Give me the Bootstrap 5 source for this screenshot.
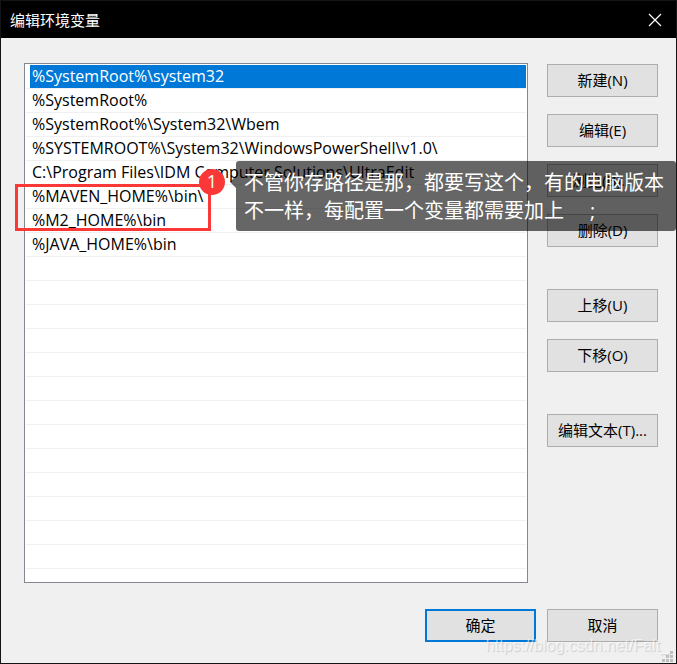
<!DOCTYPE html>
<html lang="zh-CN">
<head>
<meta charset="utf-8">
<meta name="viewport" content="width=device-width, initial-scale=1">
<title>编辑环境变量</title>
<link rel="stylesheet" href="https://cdn.jsdelivr.net/npm/bootstrap@5.3.0/dist/css/bootstrap.min.css">
<style>
body { font-family: "Open Sans", "Noto Sans CJK SC", sans-serif; font-size: 15px; line-height: 24px; color: #000; }
.dialog-window { background: #f0f0f0; border: 1px solid #141414; }
.title-bar { background: #000; color: #fff; height: 37px; padding: 0 14px 0 9px; }
.title-text { font-size: 15px; font-weight: 400; line-height: 36px; }
.close-button { color: #fff; line-height: 0; }
.dialog-body { padding: 25px 18px 21px 23px; }
.main-area { gap: 19px; }
.path-list { border: 1px solid #828790; background: #fff; padding: 1px; font-size: 16px; }
.path-item { height: 24px; line-height: 23px; border-bottom: 1px solid #f0f0f0; white-space: nowrap; }
.path-item a { display: block; margin-left: 4px; padding: 0 2px; color: #000; text-decoration: none; }
.path-item a.selected { background: #0078d7; color: #fff; }
.path-item:last-child { height: 12px; border-bottom: 0; }
.side-buttons { padding-top: 1px; gap: 17px; }
.dialog-button { width: 111px; height: 33px; padding: 0; border: 1px solid #adadad; border-radius: 0; background: #e1e1e1; color: #000; font-size: 15px; line-height: 29px; white-space: nowrap; }
.dialog-button.default-action { border: 2px solid #0078d7; }
.group-start { margin-top: 25px; }
.footer-buttons { gap: 11px; margin-top: 26px; }
.red-frame { left: 15px; top: 184px; width: 196px; height: 47px; border: 3px solid #fb3838; }
.step-number { left: 199px; top: 169px; width: 26px; height: 26px; background: #fb3838; color: #fff; font-size: 18px; line-height: 24px; text-align: center; }
.note-box { left: 236px; right: 1px; top: 161px; padding: 8px 8px 6px; border-radius: 3px; background: rgba(0,0,0,.6); color: #fff; font-size: 20px; line-height: 28px; white-space: nowrap; }
.note-box::before { content: ""; position: absolute; left: -6px; top: 15px; border: 6px solid transparent; border-left: 0; border-right-color: rgba(0,0,0,.6); }
.watermark { right: 8px; bottom: 8px; font: 16px/20px "Liberation Sans", sans-serif; color: rgba(255,255,255,.6); text-shadow: 1px 1px 1px rgba(0,0,0,.15); }
.size-grip { right: 4px; bottom: 2px; line-height: 0; }
</style>
<script defer src="https://cdn.jsdelivr.net/npm/bootstrap@5.3.0/dist/js/bootstrap.bundle.min.js"></script>
</head>
<body>
<div class="position-relative">
  <main class="dialog-window">
    <header class="title-bar d-flex align-items-center justify-content-between">
      <h1 class="title-text m-0">编辑环境变量</h1>
      <button type="button" class="close-button btn p-0 border-0" aria-label="关闭">
        <svg width="14" height="14" viewBox="0 0 14 14" fill="none" stroke="currentColor" stroke-width="1.2"><path d="M1 1L13 13M13 1L1 13"/></svg>
      </button>
    </header>
    <div class="dialog-body">
      <div class="main-area d-flex">
        <ul class="path-list list-unstyled flex-grow-1 mb-0">
          <li class="path-item"><a href="#" class="selected">%SystemRoot%\system32</a></li>
          <li class="path-item"><a href="#">%SystemRoot%</a></li>
          <li class="path-item"><a href="#">%SystemRoot%\System32\Wbem</a></li>
          <li class="path-item"><a href="#">%SYSTEMROOT%\System32\WindowsPowerShell\v1.0\</a></li>
          <li class="path-item"><a href="#">C:\Program Files\IDM Computer Solutions\UltraEdit</a></li>
          <li class="path-item"><a href="#">%MAVEN_HOME%\bin\</a></li>
          <li class="path-item"><a href="#">%M2_HOME%\bin</a></li>
          <li class="path-item"><a href="#">%JAVA_HOME%\bin</a></li>
          <li class="path-item"></li><li class="path-item"></li><li class="path-item"></li><li class="path-item"></li>
          <li class="path-item"></li><li class="path-item"></li><li class="path-item"></li><li class="path-item"></li>
          <li class="path-item"></li><li class="path-item"></li><li class="path-item"></li><li class="path-item"></li>
          <li class="path-item"></li><li class="path-item"></li>
        </ul>
        <div class="side-buttons d-flex flex-column">
          <button type="button" class="dialog-button btn">新建(N)</button>
          <button type="button" class="dialog-button btn">编辑(E)</button>
          <button type="button" class="dialog-button btn">浏览(B)...</button>
          <button type="button" class="dialog-button btn">删除(D)</button>
          <button type="button" class="dialog-button btn group-start">上移(U)</button>
          <button type="button" class="dialog-button btn">下移(O)</button>
          <button type="button" class="dialog-button btn group-start">编辑文本(T)...</button>
        </div>
      </div>
      <div class="footer-buttons d-flex justify-content-end">
        <button type="button" class="dialog-button default-action btn">确定</button>
        <button type="button" class="dialog-button btn">取消</button>
      </div>
    </div>
  </main>
  <div class="red-frame position-absolute"></div>
  <div class="note-box position-absolute">不管你存路径是那，都要写这个，有的电脑版本<br>不一样，每配置一个变量都需要加上&nbsp;&nbsp;&nbsp;&nbsp;&nbsp;;</div>
  <div class="step-number position-absolute rounded-circle">1</div>
  <div class="watermark position-absolute">https://blog.csdn.net/Falt_</div>
  <div class="size-grip position-absolute">
    <svg width="11" height="11" viewBox="0 0 11 11" fill="#bfbfbf"><path d="M8 0h3v3H8zM4 4h3v3H4zM8 4h3v3H8zM0 8h3v3H0zM4 8h3v3H4zM8 8h3v3H8z"/></svg>
  </div>
</div>
</body>
</html>
